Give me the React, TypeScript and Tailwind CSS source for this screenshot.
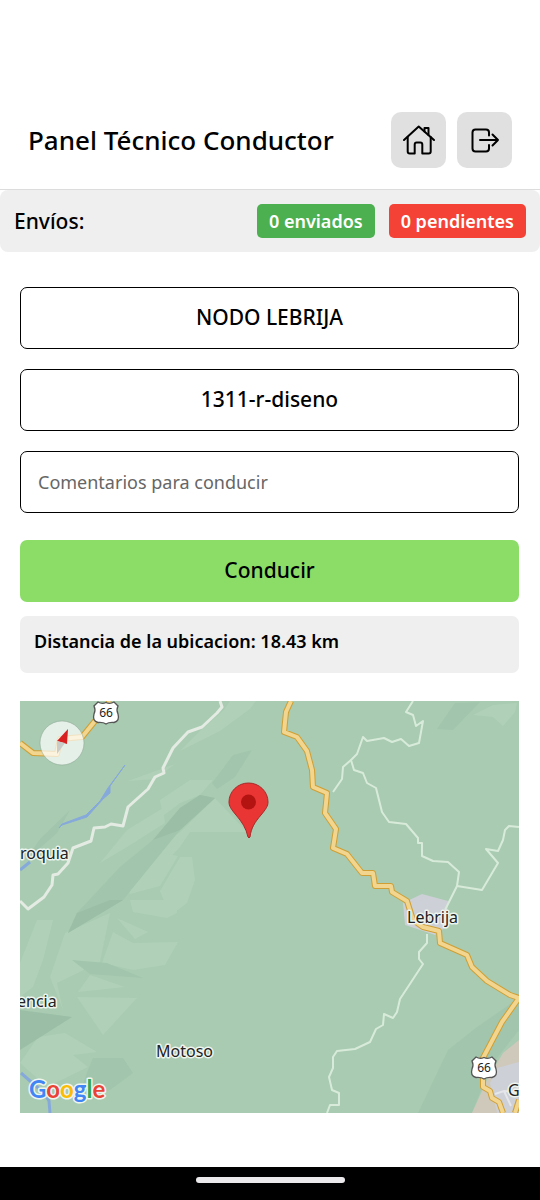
import type { ReactNode } from 'react';

const relieveClaro = [
  '108,80 155,63 143,72 136,78',
  '107,129 143,107 145,122 107,146 80,162',
  '140,99 170,79 193,79 180,94 160,102 143,115',
  '160,131 195,97 227,131 170,131 160,146 133,175 118,160',
  '210,0 236,0 230,8 200,30 160,50 182,28 203,10',
  '160,156 172,156 175,179 167,202 150,215 140,190',
  '105,178 133,150 158,155 140,185 110,193',
  '45,232 90,212 80,261 37,282 43,309 30,276',
  '93,231 113,242 158,241 145,264 113,269 82,262',
  '97,217 128,231 115,238',
  '17,219 33,219 23,259 13,286 0,296 0,262',
  '57,296 117,297 83,334',
  '70,274 105,286 58,291',
  '0,362 18,336 45,332 77,351 53,354 68,366 27,386',
  '110,199 155,199 157,212 147,217 113,211',
  '453,14 473,4 497,2 495,11 483,25 473,16',
];

const relieveMedio = [
  '20,138 50,109 37,132 5,160',
  '48,232 57,212 100,166 133,139 160,107 180,94 195,97 160,129 103,199',
  '192,82 213,54 232,49 215,76 197,88',
  '52,259 87,262 123,277 70,273',
  '73,357 103,357 113,372 90,389 57,399 68,369',
  '435,2 460,1 433,29 417,28',
  '499,297 457,326 428,349 398,412 452,412 470,366 499,329',
];

const relieveOscuro = [
  '0,309 52,316 0,349',
  '48,232 57,212 90,199 103,199',
  '133,139 160,107 180,94 195,97 160,129',
];

const caminos = [
  '200,0 202,6 197,12 182,26 168,31 153,47 143,67 144,72 135,76 128,88 108,106 103,125 91,123 85,126 74,127 71,140 53,147 48,162 38,173 33,174 32,184 24,196 8,208 0,200',
];

const caminosFinos = [
  '393,0 386,11 393,14 396,25 403,20 399,42 389,45 381,38 372,41 364,37 347,40 343,36 337,53 331,59 334,69 343,72 347,82 356,87 362,111 369,121 386,123 398,137 398,142 402,142 402,155 413,160 428,161 439,171 437,185 425,209',
  '437,185 462,189 478,162 466,148 478,150 483,139 485,129 489,125 499,126',
  '331,59 323,66 322,78 313,91',
  '407,233 407,242 399,251 399,258 403,263 380,298 377,311 373,317 364,313 363,324 356,328 350,341 335,348 317,350 313,356 313,367 309,376 312,389 319,392 319,404 310,404 307,412',
];

const carreteras = [
  '0,42 13,52 37,53 40,38 62,36 75,20 90,0',
  '271,0 266,11 264,31 277,36 287,50 292,69 293,86 307,92 305,112 316,128 313,147 327,153 342,172 353,172 355,185 371,185 372,191 387,200 393,219 403,226 419,230 420,242 447,254 452,266 467,280 490,294 499,297',
  '499,297 482,321 463,357 463,386 470,390 472,397 479,401 483,412',
  '499,399 495,412',
];

function IconButton({ label, children }: { label: string; children: ReactNode }) {
  return (
    <button
      type="button"
      aria-label={label}
      className="flex h-14 w-[55px] items-center justify-center rounded-[10px] bg-[#e0e0e0]"
    >
      <svg
        viewBox="0 0 32 32"
        className="h-8 w-8"
        fill="none"
        stroke="black"
        strokeWidth="2"
        strokeLinecap="round"
        strokeLinejoin="round"
      >
        {children}
      </svg>
    </button>
  );
}

function RouteShield({ x, y }: { x: number; y: number }) {
  return (
    <g transform={`translate(${x} ${y})`}>
      <path
        d="M-8-11 Q-4-8.5 0-10.5 Q4-8.5 8-11 L12-7 Q10-3 12 1 Q14 8 8 9.5 Q3 9 0 11 Q-3 9-8 9.5 Q-14 8-12 1 Q-10-3-12-7 Z"
        fill="white"
        stroke="#555"
        strokeWidth="1.3"
      />
      <text y="4" textAnchor="middle" className="fill-[#222] text-[12px]">66</text>
    </g>
  );
}

function MapView() {
  return (
    <svg
      viewBox="0 0 499 412"
      preserveAspectRatio="xMidYMid slice"
      role="img"
      aria-label="Mapa de la ubicacion"
      className="mt-7 h-[412px] w-full bg-[#a8cbb1]"
    >
      {/* Relieve */}
      {relieveClaro.map((p) => <polygon key={p} points={p} fill="#b0d1b8" />)}
      {relieveMedio.map((p) => <polygon key={p} points={p} fill="#a2c6ad" />)}
      {relieveOscuro.map((p) => <polygon key={p} points={p} fill="#9bbea6" />)}

      {/* Zonas urbanas */}
      <polygon points="383,202 402,193 428,200 426,226 415,234 385,224" fill="#cdd0d6" />
      <polygon points="499,339 483,352 467,379 452,412 499,412" fill="#cfc9bc" />
      <polygon points="499,361 477,367 470,382 477,412 499,412" fill="#cdd0d6" />
      <path d="M475 393 L484 390 L499 391 M484 390 L491 405" fill="none" stroke="#e4e6e9" strokeWidth="2" />

      {/* Rios */}
      <path d="M105 64 L90 85 L90 92 L83 98 L67 116 L42 124 L39 127 L42 123 L66 114 L80 100 L88 87 Z" fill="#86a9dc" stroke="#86a9dc" strokeWidth="1" />
      <path d="M0 169 L10 161" stroke="#86a9dc" strokeWidth="3" />
      <path d="M1 372 L24 392 L29 400 L30 412" fill="none" stroke="#86a9dc" strokeWidth="3" />

      {/* Caminos */}
      <g fill="none" strokeLinejoin="round">
        {caminos.map((p) => <polyline key={p} points={p} stroke="#e3ebe3" strokeWidth="3" />)}
        {caminosFinos.map((p) => <polyline key={p} points={p} stroke="#d8ebda" strokeWidth="2" />)}
        {carreteras.map((p) => <polyline key={p} points={p} stroke="#cf9f35" strokeWidth="6" />)}
        {carreteras.map((p) => <polyline key={p} points={p} stroke="#f2d58e" strokeWidth="4" />)}
      </g>

      <RouteShield x={86} y={12} />
      <RouteShield x={464} y={367} />

      {/* Lugares */}
      <g className="fill-[#222] text-[16px]" stroke="#eef5ef" strokeWidth="3" strokeLinejoin="round" paintOrder="stroke">
        <text x="0" y="158">roquia</text>
        <text x="-3" y="306">encia</text>
        <text x="136" y="356">Motoso</text>
        <text x="387" y="222">Lebrija</text>
        <text x="488" y="395">G</text>
      </g>

      {/* Brujula */}
      <circle cx="42" cy="42" r="22" fill="white" fillOpacity="0.7" stroke="#8aa391" strokeOpacity="0.5" />
      <path d="M48 28 L37 40 L47 43 Z" fill="#d92020" />
      <path d="M37 40 L45 42 L37 53 Z" fill="#c9cdc9" />

      {/* Marcador */}
      <path
        d="M228 136 C226 127 222 121 216 114 C211 108 209 105 209 101 A19.500 19 0 0 1 248 101 C248 105 246 108 241 114 C235 121 231 127 230 136 Q229 138 228 136 Z"
        fill="#ea3535"
        stroke="#a52a2a"
        strokeWidth="1"
      />
      <circle cx="228.500" cy="101" r="7.500" fill="#b31412" />

      {/* Google */}
      <text
        x="9"
        y="397"
        className="font-['Lato'] text-[24px] font-bold"
        stroke="#eef5ef"
        strokeWidth="3"
        strokeLinejoin="round"
        paintOrder="stroke"
      >
        <tspan fill="#4285f4">G</tspan>
        <tspan fill="#ea4335">o</tspan>
        <tspan fill="#fbbc05">o</tspan>
        <tspan fill="#4285f4">g</tspan>
        <tspan fill="#34a853">l</tspan>
        <tspan fill="#ea4335">e</tspan>
      </text>
    </svg>
  );
}

export default function App() {
  return (
    <div className="flex min-h-screen flex-col bg-white font-['Noto_Sans',sans-serif] text-black">
      {/* Header */}
      <header className="flex items-center justify-between border-b border-[#dcdcdc] px-7 pt-28 pb-[21px]">
        <h1 className="text-[26px] leading-8 font-medium">Panel Técnico Conductor</h1>
        <div className="flex gap-[11px]">
          <IconButton label="Inicio">
            <path d="M1 16 L15.700 2.500 L31 16" />
            <path d="M4.700 13 V27.500 Q4.700 29.500 6.700 29.500 H11.700 V20.500 Q11.700 18.500 13.700 18.500 H17.300 Q19.300 18.500 19.300 20.500 V29.500 H25.700 Q27.700 29.500 27.700 27.500 V13" />
            <path d="M21.500 7.500 V4 H25.500 V11" />
          </IconButton>
          <IconButton label="Salir">
            <path d="M20 11.500 V8.500 Q20 5.500 17 5.500 H6.500 Q3.500 5.500 3.500 8.500 V24.500 Q3.500 27.500 6.500 27.500 H17 Q20 27.500 20 24.500 V21" />
            <path d="M11 16 H29 M23.500 10.500 L29 16 L23.500 21.500" />
          </IconButton>
        </div>
      </header>

      {/* Envios */}
      <section className="flex items-center justify-between rounded-lg bg-[#efefef] p-[14px]">
        <span className="text-[21px] leading-[34px] font-medium">Envíos:</span>
        <div className="flex gap-[14px] text-lg leading-[34px] font-semibold text-white">
          <span className="rounded-[5px] bg-[#4caf50] px-3">0 enviados</span>
          <span className="rounded-[5px] bg-[#f44336] px-3">0 pendientes</span>
        </div>
      </section>

      <main className="flex flex-col pt-[35px] pr-[21px] pb-[54px] pl-5">
        <form className="flex flex-col gap-5">
          <button type="button" className="h-[62px] rounded-[7px] border border-black text-[21px] font-medium">
            NODO LEBRIJA
          </button>
          <button type="button" className="h-[62px] rounded-[7px] border border-black text-[21px] font-medium">
            1311-r-diseno
          </button>
          <input
            type="text"
            aria-label="Comentarios para conducir"
            placeholder="Comentarios para conducir"
            className="h-[62px] rounded-[7px] border border-black px-[17px] text-lg placeholder-[#666]"
          />
          <button type="submit" className="mt-[7px] h-[62px] rounded-[7px] bg-[#8bdd67] text-[21px] font-medium">
            Conducir
          </button>
        </form>

        <p className="mt-[14px] h-[57px] rounded-[7px] bg-[#efefef] px-[14px] pt-[11px] text-lg leading-7 font-semibold">
          Distancia de la ubicacion: 18.43 km
        </p>

        <MapView />
      </main>

      {/* Barra del sistema */}
      <footer className="mt-auto flex h-[33px] justify-center bg-black pt-[10px]">
        <div className="h-[6px] w-[149px] rounded-full bg-[#ece9ed]" />
      </footer>
    </div>
  );
}
